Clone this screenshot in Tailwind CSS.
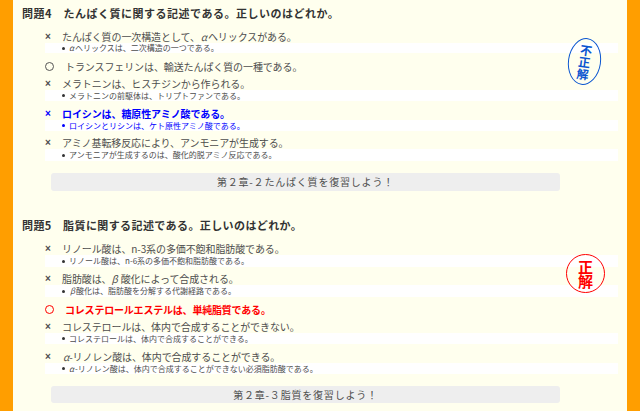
<!DOCTYPE html>
<html lang="ja">
<head>
    <meta charset="UTF-8">
    <title>問題</title>
    <script src="https://cdn.jsdelivr.net/npm/@tailwindcss/browser@4"></script>
</head>
<body class="bg-[#ff9e00] h-[411px] overflow-hidden font-['Noto_Sans_CJK_JP','Noto_Sans',sans-serif] text-[#4d4d4d]">
    <div class="relative mx-[13px] h-[411px] overflow-hidden bg-[#ffffee] px-[9px]">

        <section class="h-[211px] pt-[6px]">
            <h2 class="h-[15px] text-[11px] leading-[15px] font-bold tracking-[0.5px] text-[#333]">問題4　たんぱく質に関する記述である。正しいのはどれか。</h2>
            <ul class="mt-[9px] ml-[23px]">
                <li class="mb-[6px]">
                    <p class="flex h-[13px] items-center text-[10px] tracking-[-0.1px]"><span class="w-[17px] font-['Liberation_Sans'] font-bold">×</span>たんぱく質の一次構造として、<i class="px-[1px]">α</i>ヘリックスがある。</p>
                    <p class="flex h-[10px] items-center bg-white pl-[17px] text-[8px]"><span class="mr-[4px] h-[3px] w-[3px] rounded-full bg-[#333]"></span><i class="pr-[1px]">α</i>ヘリックスは、二次構造の一つである。</p>
                </li>
                <li class="mb-[4px]">
                    <p class="flex h-[14px] items-center text-[10px] tracking-[-0.1px]"><span class="mr-[11px] h-[9px] w-[9px] rounded-full border-[1.5px] border-[#555]"></span>トランスフェリンは、輸送たんぱく質の一種である。</p>
                </li>
                <li class="mb-[6px]">
                    <p class="flex h-[13px] items-center text-[10px] tracking-[-0.1px]"><span class="w-[17px] font-['Liberation_Sans'] font-bold">×</span>メラトニンは、ヒスチジンから作られる。</p>
                    <p class="flex h-[11px] items-center bg-white pl-[17px] text-[8px]"><span class="mr-[4px] h-[3px] w-[3px] rounded-full bg-[#333]"></span>メラトニンの前駆体は、トリプトファンである。</p>
                </li>
                <li class="mb-[5px] text-[#0000ff]">
                    <p class="flex h-[13px] items-center text-[10px] font-bold tracking-[-0.1px]"><span class="w-[17px] font-['Liberation_Sans'] font-bold">×</span>ロイシンは、糖原性アミノ酸である。</p>
                    <p class="flex h-[11px] items-center bg-white pl-[17px] text-[8px]"><span class="mr-[4px] h-[3px] w-[3px] rounded-full bg-[#0000ff]"></span>ロイシンとリシンは、ケト原性アミノ酸である。</p>
                </li>
                <li>
                    <p class="flex h-[13px] items-center text-[10px] tracking-[-0.1px]"><span class="w-[17px] font-['Liberation_Sans'] font-bold">×</span>アミノ基転移反応により、アンモニアが生成する。</p>
                    <p class="flex h-[12px] items-center bg-white pl-[17px] text-[8px]"><span class="mr-[4px] h-[3px] w-[3px] rounded-full bg-[#333]"></span>アンモニアが生成するのは、酸化的脱アミノ反応である。</p>
                </li>
            </ul>
            <a class="mt-[12px] ml-[29px] block h-[18px] w-[509px] rounded-[3px] bg-[#eeeeee] text-center text-[10px] leading-[18px] tracking-[0.8px]">第２章-２たんぱく質を復習しよう！</a>
        </section>

        <section class="h-[200px] pt-[7px]">
            <h2 class="h-[15px] text-[11px] leading-[15px] font-bold tracking-[0.4px] text-[#333]">問題5　脂質に関する記述である。正しいのはどれか。</h2>
            <ul class="mt-[9px] ml-[23px]">
                <li class="mb-[5px]">
                    <p class="flex h-[13px] items-center text-[10px] tracking-[-0.1px]"><span class="w-[17px] font-['Liberation_Sans'] font-bold">×</span>リノール酸は、n-3系の多価不飽和脂肪酸である。</p>
                    <p class="flex h-[12px] items-center bg-white pl-[17px] text-[8px]"><span class="mr-[4px] h-[3px] w-[3px] rounded-full bg-[#333]"></span>リノール酸は、n-6系の多価不飽和脂肪酸である。</p>
                </li>
                <li class="mb-[5px]">
                    <p class="flex h-[13px] items-center text-[10px] tracking-[-0.1px]"><span class="w-[17px] font-['Liberation_Sans'] font-bold">×</span>脂肪酸は、<i class="pr-[3px]">β</i>酸化によって合成される。</p>
                    <p class="flex h-[12px] items-center bg-white pl-[17px] text-[8px]"><span class="mr-[4px] h-[3px] w-[3px] rounded-full bg-[#333]"></span><i class="px-[1px]">β</i>酸化は、脂肪酸を分解する代謝経路である。</p>
                </li>
                <li class="mb-[4px] text-[#ff0000]">
                    <p class="flex h-[14px] items-center text-[10px] font-bold tracking-[-0.2px]"><span class="mr-[11px] h-[9px] w-[9px] rounded-full border-[1.5px] border-[#ff0000]"></span>コレステロールエステルは、単純脂質である。</p>
                </li>
                <li class="mb-[6px]">
                    <p class="flex h-[13px] items-center text-[10px] tracking-[-0.1px]"><span class="w-[17px] font-['Liberation_Sans'] font-bold">×</span>コレステロールは、体内で合成することができない。</p>
                    <p class="flex h-[11px] items-center bg-white pl-[17px] text-[8px]"><span class="mr-[4px] h-[3px] w-[3px] rounded-full bg-[#333]"></span>コレステロールは、体内で合成することができる。</p>
                </li>
                <li>
                    <p class="flex h-[13px] items-center text-[10px] tracking-[-0.1px]"><span class="w-[17px] font-['Liberation_Sans'] font-bold">×</span><i class="pl-[1px]">α</i>-リノレン酸は、体内で合成することができる。</p>
                    <p class="flex h-[11px] items-center bg-white pl-[17px] text-[8px]"><span class="mr-[4px] h-[3px] w-[3px] rounded-full bg-[#333]"></span><i class="pr-[1px]">α</i>-リノレン酸は、体内で合成することができない必須脂肪酸である。</p>
                </li>
            </ul>
            <a class="mt-[12px] ml-[29px] block h-[17px] w-[509px] rounded-[3px] bg-[#eeeeee] text-center text-[10px] leading-[17px] tracking-[0.8px]">第２章-３脂質を復習しよう！</a>
        </section>

        <!-- stamps -->
        <div class="absolute top-[38px] left-[555px] flex h-[47px] w-[33px] rotate-[8deg] items-center justify-center rounded-[50%] border-[1.5px] border-[#0a55d0] text-[#0a55d0]">
            <p class="text-center text-[12px] leading-[12px] font-bold">不<br>正<br>解</p>
        </div>
        <div class="absolute top-[254px] left-[553px] flex h-[39px] w-[39px] items-center justify-center rounded-full border-[1.5px] border-[#ff0000] text-[#ff0000]">
            <p class="text-center text-[15px] leading-[14px] font-bold">正<br>解</p>
        </div>
    </div>
</body>
</html>
